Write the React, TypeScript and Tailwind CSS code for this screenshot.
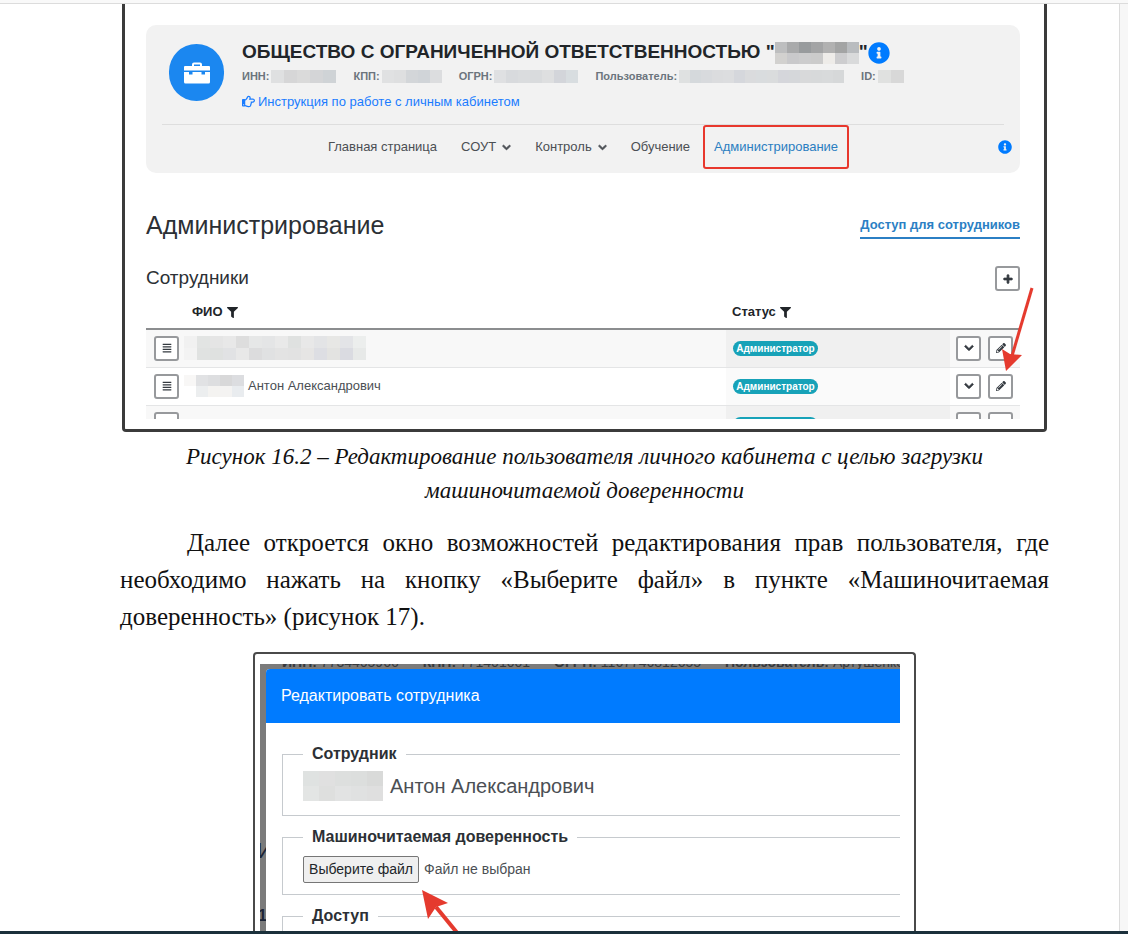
import { useRef } from "react";
import type { ReactNode } from "react";
import {
  FaAlignJustify,
  FaChevronDown,
  FaFilter,
  FaInfoCircle,
  FaPencilAlt,
  FaPlus,
  FaRegHandPointRight,
} from "react-icons/fa";

// Hides private data behind a grid of flat tiles
function Mosaic({ rows, cell, label }: { rows: string[][]; cell: string; label: string }) {
  return (
    <span role="img" aria-label={label} className="inline-flex flex-col shrink-0">
      {rows.map((row, i) => (
        <span key={i} className="flex">
          {row.map((color, j) => (
            <span key={j} className={`${cell} ${color}`} />
          ))}
        </span>
      ))}
    </span>
  );
}

const meta = [
  { label: "ИНН:", cell: "w-[13px] h-[13px]", tiles: ["bg-[#dfe0e1]", "bg-[#d6d6d7]", "bg-[#dadada]", "bg-[#d4d5d7]", "bg-[#cfd3d6]"] },
  { label: "КПП:", cell: "w-[12px] h-[13px]", tiles: ["bg-[#e0e1e2]", "bg-[#dedfe0]", "bg-[#d3d6d9]", "bg-[#d0d4d8]", "bg-[#dcdddf]"] },
  { label: "ОГРН:", cell: "w-[12px] h-[13px]", tiles: ["bg-[#dfe0e2]", "bg-[#d8dadd]", "bg-[#dadcde]", "bg-[#d9dbdd]", "bg-[#dedfe0]", "bg-[#d3d5da]", "bg-[#d8dde0]"] },
  {
    label: "Пользователь:",
    cell: "w-[11px] h-[13px]",
    tiles: ["bg-[#dfe1e1]", "bg-[#d5d9dc]", "bg-[#d8dadd]", "bg-[#dbdcde]", "bg-[#dcdddf]", "bg-[#d5d7dc]", "bg-[#dadbdd]", "bg-[#d9dcde]", "bg-[#dadcdd]", "bg-[#d5d6db]", "bg-[#d5d7da]", "bg-[#d8d9da]", "bg-[#d7d9da]", "bg-[#d8dadb]", "bg-[#d6d8d9]"],
  },
  { label: "ID:", cell: "w-[13px] h-[13px]", tiles: ["bg-[#e0e1e0]", "bg-[#d8d8d8]"] },
];

const companyTiles = [
  ["bg-[#bdbebf]", "bg-[#a9aaab]", "bg-[#989b9d]", "bg-[#a3a4a5]", "bg-[#b1b1b1]", "bg-[#a3a4a4]", "bg-[#b9bcbf]"],
  ["bg-[#d2d1cf]", "bg-[#c9c9cb]", "bg-[#cccccd]", "bg-[#cbcbcb]", "bg-[#eeece9]", "bg-[#cdcdcf]", "bg-[#d9dadb]"],
];

const nameTiles = [
  ["bg-[#f1f1f1]", "bg-[#e2e4e3]", "bg-[#e5e5e5]", "bg-[#e8e8e8]", "bg-[#dddddd]", "bg-[#e6e7e7]", "bg-[#e4e5e6]", "bg-[#e9e9e9]", "bg-[#dfe1e0]", "bg-[#e8e8e8]", "bg-[#e3e4e6]", "bg-[#e7e7e5]", "bg-[#e3e4e7]", "bg-[#eceeed]"],
  ["bg-[#f3f3f3]", "bg-[#e0e2e1]", "bg-[#dfe1e0]", "bg-[#e1e2e4]", "bg-[#e8e8e8]", "bg-[#dcdcdd]", "bg-[#e0e1e2]", "bg-[#e3e3e3]", "bg-[#e2e2e2]", "bg-[#e6e5e4]", "bg-[#dddee3]", "bg-[#e3e3e1]", "bg-[#dadbe1]", "bg-[#e7e9e8]"],
];

const surnameTiles = [
  ["bg-[#f8f7f6]", "bg-[#e1e2e4]", "bg-[#dddee0]", "bg-[#d8d8d9]", "bg-[#dcdde0]"],
  ["bg-transparent", "bg-[#eceeef]", "bg-[#f4f3f1]", "bg-[#f4f3f2]", "bg-[#e9ecef]"],
];

const modalTiles = [
  ["bg-[#dfe2e1]", "bg-[#e0e0e0]", "bg-[#dddfde]", "bg-[#dcdedd]", "bg-[#d9dad9]"],
  ["bg-[#e3e5e4]", "bg-[#dedfde]", "bg-[#e2e3e3]", "bg-[#e0e1e1]", "bg-[#dfdfdf]"],
];

function ToolButton({ title, children }: { title: string; children: ReactNode }) {
  return (
    <button
      type="button"
      aria-label={title}
      className="inline-flex size-[25px] shrink-0 items-center justify-center rounded-[3px] border-2 border-[#97999c] bg-white text-[10px] text-[#343a40]"
    >
      {children}
    </button>
  );
}

function BriefcaseIcon() {
  return (
    <svg viewBox="0 0 26 22" className="w-[26px] fill-white" aria-hidden="true">
      <path
        fillRule="evenodd"
        d="M8 4V2.500Q8 0.500 10 0.500H16Q18 0.500 18 2.500V4H25Q26 4 26 5V8.500H0V5Q0 4 1 4ZM10 4H16V2.500H10Z"
      />
      <path d="M0 10H5V12.500H8.500V10H17.500V12.500H21V10H26V20Q26 21.500 24.500 21.500H1.500Q0 21.500 0 20Z" />
    </svg>
  );
}

function CompanyHeader() {
  return (
    <header className="rounded-[10px] bg-[#f2f2f2] px-4 pt-4">
      <div className="flex h-[83px] gap-[18px] pl-[7px]">
        <div className="mt-[3px] flex h-[57px] w-[55px] shrink-0 items-center justify-center rounded-full bg-[#1b87f0]">
          <BriefcaseIcon />
        </div>
        <div className="min-w-0 flex-1">
          <div className="flex h-[23px] items-center whitespace-nowrap">
            <h1 className="flex items-center text-[19px] font-bold text-[#212529]">
              ОБЩЕСТВО С ОГРАНИЧЕННОЙ ОТВЕТСТВЕННОСТЬЮ "
              <Mosaic rows={companyTiles} cell="w-[12px] h-[11px]" label="Название скрыто" />"
            </h1>
            <FaInfoCircle className="size-[22px] text-[#007bff]" />
          </div>
          <dl className="flex h-[24px] items-center gap-[17px] whitespace-nowrap text-[11px] font-bold text-[#6c757d]">
            {meta.map((item) => (
              <div key={item.label} className="flex items-center gap-[2px]">
                <dt>{item.label}</dt>
                <dd className="flex">
                  <Mosaic rows={[item.tiles]} cell={item.cell} label="Скрыто" />
                </dd>
              </div>
            ))}
          </dl>
          <a href="#" className="flex h-[27px] w-max items-center gap-[3px] text-[13px] text-[#1a7cff]">
            <FaRegHandPointRight className="size-[13px]" />
            Инструкция по работе с личным кабинетом
          </a>
        </div>
      </div>
      <nav className="grid h-[49px] grid-cols-[1fr_auto_1fr] items-start border-t border-[#dedede] text-[13px] text-[#4b4f54]">
        <span />
        <div className="flex h-11 items-center gap-6 whitespace-nowrap">
          <a href="#">Главная страница</a>
          <a href="#" className="flex items-center gap-[6px]">
            СОУТ <FaChevronDown className="size-[9px] stroke-[50px]" />
          </a>
          <a href="#" className="flex items-center gap-[6px]">
            Контроль <FaChevronDown className="size-[9px] stroke-[50px]" />
          </a>
          <a href="#">Обучение</a>
          <a href="#" className="relative flex h-full items-center text-[#2b7ec1]">
            Администрирование
            <span className="absolute inset-y-0 -left-[11px] -right-[11px] rounded-[3px] border-2 border-[#e8382d]" />
          </a>
        </div>
        <FaInfoCircle className="-mr-2 mt-[15px] size-[14px] justify-self-end text-[#007bff]" />
      </nav>
    </header>
  );
}

const employees = [
  { id: 1, name: <Mosaic rows={nameTiles} cell="w-[13px] h-[12px]" label="Имя скрыто" />, shade: "bg-[#f8f8f8]", status: "bg-[#f0f0f0]" },
  {
    id: 2,
    name: (
      <>
        <Mosaic rows={surnameTiles} cell="w-[12px] h-[11px]" label="Фамилия скрыта" />
        <span className="ml-1">Антон Александрович</span>
      </>
    ),
    shade: "bg-white",
    status: "bg-[#fafafa]",
  },
  { id: 3, name: <span className="ml-2">Кузьмина Светлана Викторовна</span>, shade: "bg-[#f8f8f8]", status: "bg-[#f0f0f0]" },
];

function EmployeeTable() {
  return (
    <div className="mt-[5px] h-[123px] overflow-hidden">
      <table className="w-full table-fixed border-collapse text-left text-[13px] text-[#4b4f54]">
        <thead>
          <tr className="h-[33px] border-b-2 border-[#8b8d8f] text-[#212529]">
            <th className="w-[38px]" aria-label="Меню" />
            <th className="pl-2">
              <span className="flex items-center gap-1">
                ФИО <FaFilter className="size-[11px]" />
              </span>
            </th>
            <th className="w-[224px] pl-[6px]">
              <span className="flex items-center gap-1">
                Статус <FaFilter className="size-[11px]" />
              </span>
            </th>
            <th className="w-[70px]" aria-label="Действия" />
          </tr>
        </thead>
        <tbody>
          {employees.map((employee) => (
            <tr key={employee.id} className={`h-[38px] border-b border-[#e4e5e6] ${employee.shade}`}>
              <td className="pl-2">
                <span className="flex">
                  <ToolButton title="Меню">
                    <FaAlignJustify />
                  </ToolButton>
                </span>
              </td>
              <td>
                <span className="flex items-center">{employee.name}</span>
              </td>
              <td className={`pl-[7px] ${employee.status}`}>
                <span className="flex h-[15px] w-[85px] items-center justify-center rounded-full bg-[#17a2b8] text-[10px] font-bold text-white">
                  Администратор
                </span>
              </td>
              <td className="pl-[6px]">
                <span className="flex gap-[7px]">
                  <ToolButton title="Подробнее">
                    <FaChevronDown className="stroke-[40px]" />
                  </ToolButton>
                  <ToolButton title="Редактировать">
                    <FaPencilAlt />
                  </ToolButton>
                </span>
              </td>
            </tr>
          ))}
        </tbody>
      </table>
    </div>
  );
}

function AdminFigure() {
  return (
    <figure>
      <div className="relative mx-[2px] rounded-b-[4px] border-x-3 border-b-3 border-[#3b3b3b] pb-[10px] pl-[21px] pr-6 pt-[21px] font-['Liberation_Sans',sans-serif]">
        <CompanyHeader />
        <div className="mt-[37px] flex h-[32px] items-center justify-between">
          <h2 className="text-[25px] text-[#2c3035]">Администрирование</h2>
          <a href="#" className="mt-[2px] border-b-2 border-[#2b7fc4] pb-[2px] text-[13px] font-bold text-[#2b7fc4]">
            Доступ для сотрудников
          </a>
        </div>
        <div className="mt-6 flex h-[25px] items-center justify-between">
          <h3 className="text-[19px] text-[#2c3035]">Сотрудники</h3>
          <ToolButton title="Добавить">
            <FaPlus className="stroke-[40px]" />
          </ToolButton>
        </div>
        <EmployeeTable />
        <svg viewBox="0 0 36 90" className="absolute bottom-[57px] right-[10px] h-[90px] w-[36px]" aria-hidden="true">
          <path d="M34 6 14 74" className="fill-none stroke-[#e53a2e]" strokeWidth="3" />
          <path d="M8 89 4 67 12 72 24 73Z" className="fill-[#e53a2e]" />
        </svg>
      </div>
      <figcaption className="mx-auto mt-2 max-w-[820px] text-center text-[23px] leading-[34px] italic">
        Рисунок 16.2 – Редактирование пользователя личного кабинета с целью загрузки машиночитаемой доверенности
      </figcaption>
    </figure>
  );
}

function Group({ title, className, children }: { title: string; className: string; children?: ReactNode }) {
  return (
    <fieldset className={`border-y border-l border-[#c6cace] pl-[20px] ${className}`}>
      <legend className="px-[9px] text-[16px] leading-[24px] font-bold text-[#2c3035]">{title}</legend>
      {children}
    </fieldset>
  );
}

function EditFigure() {
  const fileRef = useRef<HTMLInputElement>(null);

  return (
    <figure className="mx-auto mt-[17px] w-[663px] max-w-full rounded-t-[4px] border-2 border-b-0 border-[#4a4a4a] pl-[5px] pr-[14px] pt-[10px] font-['Liberation_Sans',sans-serif]">
      <div className="relative h-[400px] overflow-hidden bg-[#7b7b7b] pl-[6px] pt-[5px]">
        {/* page content that shows round the edges of the dialog */}
        <div className="absolute left-[22px] -top-[11px] flex gap-6 whitespace-nowrap text-[14px] leading-[18px] text-[#35383b]">
          <span><b>ИНН:</b> 7734465966</span>
          <span><b>КПП:</b> 771401001</span>
          <span><b>ОГРН:</b> 1167746812655</span>
          <span><b>Пользователь:</b> Артушенко</span>
        </div>
        <div className="absolute -left-[3px] top-[174px] text-[22px] leading-[26px] text-[#1c2436]">И</div>
        <div className="absolute -left-[2px] top-[241px] text-[16px] leading-[22px] font-bold text-[#1c2436]">1</div>
        <section className="relative h-full overflow-hidden rounded-tl-[4px] bg-white">
          <h2 className="flex h-[54px] items-center bg-[#007bff] pl-[15px] text-[16px] text-white">
            Редактировать сотрудника
          </h2>
          <div className="pl-4 pt-[19px]">
            <Group title="Сотрудник" className="h-[74px]">
              <div className="mt-[5px] flex items-center gap-[7px] text-[20px] text-[#4b4f54]">
                <Mosaic rows={modalTiles} cell="w-[16px] h-[15px]" label="Фамилия скрыта" />
                Антон Александрович
              </div>
            </Group>
            <Group title="Машиночитаемая доверенность" className="mt-[9px] h-[70px]">
              <div className="mt-[7px] flex items-center gap-[5px] whitespace-nowrap text-[14px] text-[#4b4f54]">
                <button
                  type="button"
                  onClick={() => fileRef.current?.click()}
                  className="h-[27px] w-[116px] rounded-[2px] border border-[#767676] bg-[#efefef] text-[#212529]"
                >
                  Выберите файл
                </button>
                <input ref={fileRef} type="file" aria-label="Машиночитаемая доверенность" className="hidden" />
                Файл не выбран
              </div>
            </Group>
            <Group title="Доступ" className="mt-[9px] h-[120px]" />
          </div>
        </section>
        <svg viewBox="0 0 60 70" className="absolute left-[160px] top-[225px] h-[70px] w-[60px]" aria-hidden="true">
          <path d="M16 18 52 62" className="fill-none stroke-[#e53a2e]" strokeWidth="4" />
          <path d="M2 1 28 14 16 18 8 30Z" className="fill-[#e53a2e]" />
        </svg>
      </div>
    </figure>
  );
}

export default function App() {
  return (
    <div className="flex h-screen flex-col overflow-hidden bg-white font-['Liberation_Serif',serif] text-[#111]">
      <div className="h-1 shrink-0 border-b border-[#dcdcdc] bg-[#f9f9f9]" />
      <div className="flex min-h-0 flex-1">
        <main className="min-w-0 flex-1 overflow-hidden pl-[120px] pr-[70px]">
          <AdminFigure />
          <p className="mt-4 text-justify indent-[67px] text-[25px] leading-[37px]">
            Далее откроется окно возможностей редактирования прав пользователя, где необходимо нажать на кнопку
            «Выберите файл» в пункте «Машиночитаемая доверенность» (рисунок 17).
          </p>
          <EditFigure />
        </main>
        <div className="w-[9px] shrink-0 border-l border-[#dcdcdc] bg-[#f7f7f7]" />
      </div>
      <div className="h-[3px] shrink-0 bg-[#1b303b]" />
    </div>
  );
}
